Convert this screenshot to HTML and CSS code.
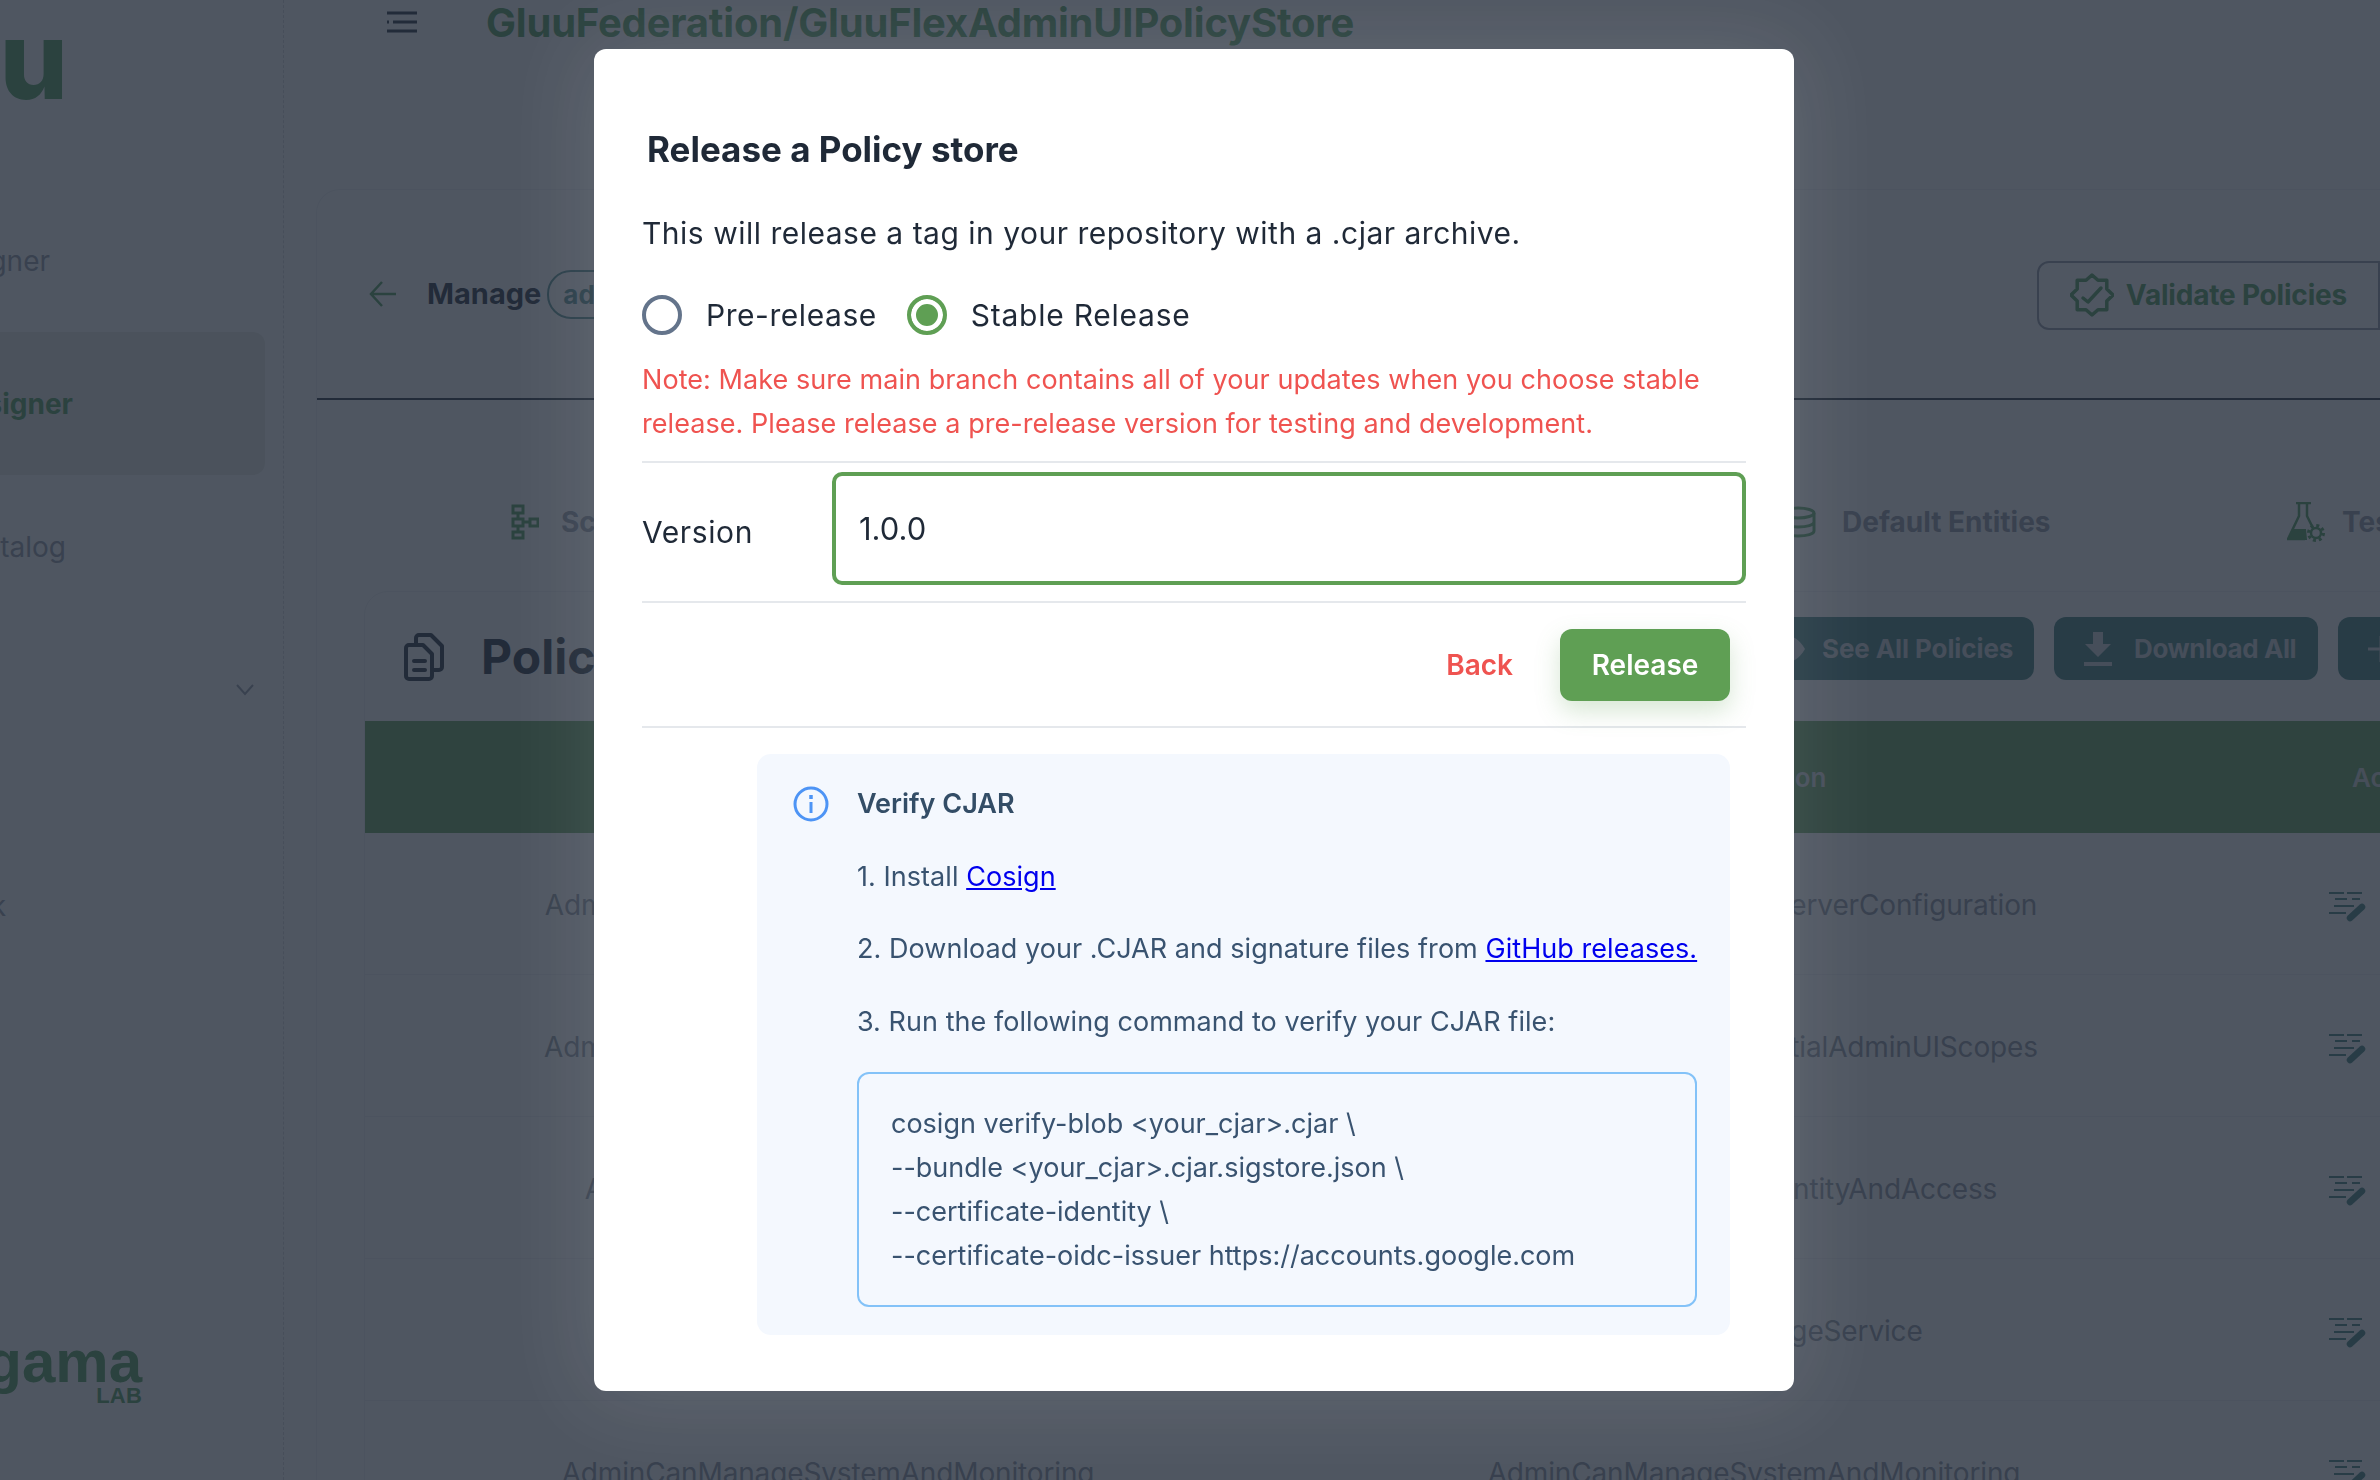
FILE: index.html
```html
<!DOCTYPE html>
<html lang="en">
  <head>
    <meta charset="UTF-8" />
    <title>Release a Policy store</title>
    <link rel="stylesheet" href="styles.css">
  </head>
  <body>
    <div id="app">
      <aside class="sidebar">
        <div class="logo">gluu</div>
        <div class="nav-item nav-first">Designer</div>
        <div class="nav-item nav-active">Policy Designer</div>
        <div class="nav-item nav-third">Catalog</div>
        <div class="nav-item nav-toggle">
          <svg width="18" height="12" viewBox="0 0 18 12"><path d="M1 1l8 9 8-9" fill="none" stroke="#9098a5" stroke-width="2"/></svg>
        </div>
        <div class="nav-item nav-fifth">Link</div>
        <div class="agama">
          <span class="agama-name">agama</span>
          <span class="agama-lab">LAB</span>
        </div>
      </aside>

      <main class="content">
        <header class="topbar">
          <svg class="menu-icon" width="30" height="22" viewBox="0 0 30 22">
            <path d="M0 2h30M6 11h24M0 20h30M0 11h2" stroke="#1f2937" stroke-width="3" fill="none"/>
          </svg>
          <h1 class="repo-title">GluuFederation/GluuFlexAdminUIPolicyStore</h1>
        </header>

        <section class="card">
          <div class="card-head">
            <svg class="back-icon" width="27" height="26" viewBox="0 0 27 26"><path d="M27 13H2M13 1L2 13l11 12" fill="none" stroke="#4a9a55" stroke-width="2.5"/></svg>
            <strong class="manage">Manage</strong>
            <span class="badge">admin-ui-policy-store</span>
            <div class="head-actions">
              <div class="btn-outline">
                <svg width="44" height="44" viewBox="0 0 44 44" fill="none" stroke="#4a9a55" stroke-width="3.5" stroke-linejoin="round" stroke-linecap="round">
                  <path d="M22 2l6 5.2h8.8v8.7l6.2 6.1-6.2 6.1v8.7H28L22 42l-6-5.2H7.2v-8.7L1 22l6.2-6.1V7.2H16z"/>
                  <path d="M13 25l5 4 13-14"/>
                </svg>
                <span>Validate Policies</span>
              </div>
              <div class="btn-outline btn-next"></div>
            </div>
          </div>

          <nav class="tabs">
            <div class="tab tab-schema">
              <svg width="28" height="36" viewBox="0 0 28 36" fill="none" stroke="#4a9a55" stroke-width="3">
                <rect x="2" y="2" width="10" height="7"/><rect x="2" y="15" width="10" height="7"/><rect x="2" y="28" width="10" height="6"/><rect x="19" y="15" width="8" height="7"/>
                <path d="M7 9v6M7 22v6M12 18h7"/>
              </svg>
              <span>Schema</span>
            </div>
            <div class="tab tab-entities">
              <svg width="40" height="32" viewBox="0 0 40 32" fill="none" stroke="#4a9a55" stroke-width="3">
                <ellipse cx="20" cy="7" rx="16" ry="5"/><path d="M4 7v18c0 3 7 5 16 5s16-2 16-5V7M4 16c0 3 7 5 16 5s16-2 16-5"/>
              </svg>
              <span>Default Entities</span>
            </div>
            <div class="tab tab-test">
              <svg width="38" height="40" viewBox="0 0 38 40">
                <path d="M9 1h15M12 1v13L1 37h17M20 1v13l6 12" fill="none" stroke="#4a9a55" stroke-width="2.5"/>
                <path d="M6 27h13l1 11H1z" fill="#4a9a55"/>
                <circle cx="29" cy="31" r="5" fill="none" stroke="#4a9a55" stroke-width="2.5"/>
                <circle cx="29" cy="31" r="7.5" fill="none" stroke="#4a9a55" stroke-width="3" stroke-dasharray="3 2.9"/>
              </svg>
              <span>Test</span>
            </div>
          </nav>

          <section class="policies">
            <div class="policies-head">
              <svg class="doc-icon" width="40" height="48" viewBox="0 0 40 48" fill="none" stroke="#1f2937" stroke-width="4" stroke-linejoin="round" stroke-linecap="round">
                <path d="M5 12h14l9 9v22a3 3 0 0 1-3 3H5a3 3 0 0 1-3-3V15a3 3 0 0 1 3-3z"/>
                <path d="M12 11V5a3 3 0 0 1 3-3h12l11 11v21a3 3 0 0 1-3 3h-6"/>
                <path d="M10 28h11M10 37h11"/>
              </svg>
              <h2 class="policies-title">Policies</h2>
              <div class="policies-actions">
                <div class="btn-solid btn-see">
                  <svg width="38" height="28" viewBox="0 0 38 28"><path d="M1 14C7 4 13 1 19 1s12 3 18 13c-6 10-12 13-18 13S7 24 1 14z" fill="#d0d5dc"/><circle cx="19" cy="14" r="6" fill="#3c7d7a"/></svg>
                  <span>See All Policies</span>
                </div>
                <div class="btn-solid btn-download">
                  <svg width="28" height="34" viewBox="0 0 28 34"><path d="M9 0h10v12h8L14 25 1 12h8zM0 30h28v4H0z" fill="#d0d5dc"/></svg>
                  <span>Download All</span>
                </div>
                <div class="btn-solid btn-add">
                  <svg width="26" height="26" viewBox="0 0 26 26"><path d="M13 0v26M0 13h26" stroke="#d0d5dc" stroke-width="3"/></svg>
                  <span>Add Policy</span>
                </div>
              </div>
            </div>

            <div class="table-head">
              <div>Policy Name</div>
              <div>Description</div>
              <div class="col-action">Actions</div>
            </div>

            <div class="table-row">
              <div>AdminCanManageAuthServerConfiguration</div>
              <div>AdminCanManageAuthServerConfiguration</div>
              <div class="col-action"><svg class="edit-icon"><use href="#edit"/></svg></div>
            </div>
            <div class="table-row">
              <div>AdminCanManageEssentialAdminUIScopes</div>
              <div>AdminCanManageEssentialAdminUIScopes</div>
              <div class="col-action"><svg class="edit-icon"><use href="#edit"/></svg></div>
            </div>
            <div class="table-row">
              <div>AdminCanManageIdentityAndAccess</div>
              <div>AdminCanManageIdentityAndAccess</div>
              <div class="col-action"><svg class="edit-icon"><use href="#edit"/></svg></div>
            </div>
            <div class="table-row">
              <div>AdminCanStorageService</div>
              <div>AdminCanStorageService</div>
              <div class="col-action"><svg class="edit-icon"><use href="#edit"/></svg></div>
            </div>
            <div class="table-row">
              <div>AdminCanManageSystemAndMonitoring</div>
              <div>AdminCanManageSystemAndMonitoring</div>
              <div class="col-action"><svg class="edit-icon"><use href="#edit"/></svg></div>
            </div>
          </section>
        </section>
      </main>
    </div>

    <svg width="0" height="0" class="defs">
      <symbol id="edit" viewBox="0 0 38 31">
        <path d="M1 2h15M19 2h15M7 8h12M24 8h8M6 15h20M1 22h17" stroke="#3c7d7a" stroke-width="2" fill="none"/>
        <path d="M34 16L22 27" stroke="#3c7d7a" stroke-width="6.5" stroke-linecap="round" fill="none"/>
      </symbol>
    </svg>

    <div class="overlay"></div>

    <div class="modal">
      <h3 class="modal-title">Release a Policy store</h3>
      <p class="modal-desc">This will release a tag in your repository with a .cjar archive.</p>

      <div class="radios">
        <label class="radio"><span class="radio-mark"></span>Pre-release</label>
        <label class="radio radio-on"><span class="radio-mark"></span>Stable Release</label>
      </div>

      <p class="note">Note: Make sure main branch contains all of your updates when you choose stable release. Please release a pre-release version for testing and development.</p>

      <div class="field">
        <label class="field-label" for="version">Version</label>
        <input type="text" id="version" value="1.0.0" />
      </div>

      <div class="modal-actions">
        <button class="btn-back">Back</button>
        <button class="btn-release">Release</button>
      </div>

      <div class="verify">
        <div class="verify-head">
          <svg width="36" height="36" viewBox="0 0 36 36" fill="none" stroke="#4d94f5" stroke-width="3">
            <circle cx="18" cy="18" r="16"/>
            <path d="M18 16v11"/>
            <path d="M18 9v4" stroke-width="3.5"/>
          </svg>
          <strong>Verify CJAR</strong>
        </div>
        <ol class="verify-steps">
          <li>1. Install <a href="#">Cosign</a></li>
          <li>2. Download your .CJAR and signature files from <a href="#">GitHub releases.</a></li>
          <li>3. Run the following command to verify your CJAR file:</li>
        </ol>
        <div class="code-box">
          <div>cosign verify-blob &lt;your_cjar&gt;.cjar \</div>
          <div>--bundle &lt;your_cjar&gt;.cjar.sigstore.json \</div>
          <div>--certificate-identity \</div>
          <div>--certificate-oidc-issuer https://accounts.google.com</div>
        </div>
      </div>
    </div>
  </body>
</html>
```

FILE: styles.css
```css
* {
  box-sizing: border-box;
}
html,
body {
  margin: 0;
  padding: 0;
  height: 100%;
  overflow: hidden;
  background: #fff;
  font-family: Inter, "Noto Sans", sans-serif;
  color: #1f2937;
}
h1,
h2,
h3,
p,
ol {
  margin: 0;
  padding: 0;
}
.defs {
  position: absolute;
}

/* page behind the dialog */
#app {
  display: flex;
  width: 2380px;
  height: 1480px;
  overflow: hidden;
}
.sidebar {
  flex: 0 0 284px;
  display: flex;
  flex-direction: column;
  height: 1480px;
  overflow: hidden;
  border-right: 1px dashed #d4d6da;
}
.logo {
  display: flex;
  justify-content: flex-end;
  height: 189px;
  padding: 10px 217px 0 0;
  font-size: 108px;
  font-weight: 800;
  line-height: 100px;
  letter-spacing: -2px;
  white-space: nowrap;
  color: #4a9a55;
}
.nav-item {
  display: flex;
  justify-content: flex-end;
  align-items: center;
  flex: 0 0 143px;
  white-space: nowrap;
  font-size: 28px;
  color: #9098a5;
}
.nav-first {
  padding-right: 233px;
}
.nav-active {
  margin-right: 18px;
  padding-right: 192px;
  border-radius: 0 12px 12px 0;
  background: #eaece6;
  font-weight: 700;
  color: #4a9a55;
}
.nav-third {
  padding-right: 217px;
}
.nav-toggle {
  padding-right: 29px;
}
.nav-fifth {
  margin-top: 73px;
  padding-right: 277px;
}
.agama {
  display: flex;
  flex-direction: column;
  align-items: flex-end;
  margin-top: auto;
  padding: 0 141px 75px 0;
  color: #4a9a55;
  font-family: "Liberation Sans", sans-serif;
  font-weight: 700;
  white-space: nowrap;
}
.agama-name {
  font-size: 60px;
  line-height: 50px;
}
.agama-lab {
  font-size: 22px;
  line-height: 18px;
  letter-spacing: 0.2px;
}
.content {
  flex: 1;
  min-width: 0;
}
.topbar {
  display: flex;
  align-items: center;
  height: 44px;
  padding-left: 103px;
}
.menu-icon {
  flex: none;
}
.repo-title {
  margin-left: 69px;
  font-size: 40px;
  font-weight: 700;
  letter-spacing: -0.2px;
  white-space: nowrap;
  color: #4a9a55;
}
.card {
  margin: 145px 0 0 32px;
  border: 1px solid #eef0f2;
  border-right: 0;
  border-radius: 24px 0 0 0;
}
.card-head {
  display: flex;
  align-items: center;
  height: 210px;
  padding: 0 0 0 52px;
  border-bottom: 2px solid #1f2937;
  white-space: nowrap;
}
.back-icon {
  flex: none;
}
.manage {
  margin: -2px 0 0 31px;
  font-size: 29px;
  font-weight: 700;
}
.badge {
  margin-left: 6px;
  padding: 7px 14px;
  border: 2px solid #4b8a8a;
  border-radius: 24px;
  font-size: 26px;
  font-weight: 700;
  color: #4b8a8a;
}
.head-actions {
  display: flex;
  margin-left: auto;
  margin-right: -200px;
  padding-top: 2px;
}
.btn-outline {
  display: flex;
  align-items: center;
  gap: 12px;
  height: 69px;
  padding: 0 31px 0 31px;
  border: 2px solid #9098a5;
  border-radius: 12px 0 0 12px;
  font-size: 28px;
  font-weight: 700;
  letter-spacing: -0.2px;
  color: #4a9a55;
}
.btn-next {
  width: 200px;
  border-left: 0;
  border-radius: 0;
}
.tabs {
  position: relative;
  height: 191px;
  white-space: nowrap;
}
.tab {
  position: absolute;
  top: 103px;
  display: flex;
  align-items: center;
  height: 38px;
  font-size: 28px;
  font-weight: 700;
  color: #9098a5;
}
.tab-schema {
  left: 194px;
  gap: 22px;
}
.tab-entities {
  left: 1461px;
  gap: 24px;
}
.tab-test {
  left: 1970px;
  gap: 17px;
}
.policies {
  width: 2100px;
  margin-left: 47px;
  border: 1px solid #eef0f2;
  border-radius: 24px 0 0 0;
}
.policies-head {
  position: relative;
  display: flex;
  align-items: center;
  height: 129px;
  padding-left: 39px;
  white-space: nowrap;
}
.policies-title {
  margin-left: 37px;
  font-size: 48px;
  font-weight: 700;
}
.policies-actions {
  position: absolute;
  top: 25px;
  left: 1380px;
  display: flex;
  gap: 20px;
}
.btn-solid {
  display: flex;
  align-items: center;
  height: 63px;
  border-radius: 12px;
  background: #3c7d7a;
  font-size: 26px;
  font-weight: 700;
  letter-spacing: -0.1px;
  color: #d0d5dc;
}
.btn-see {
  width: 289px;
  gap: 16px;
  padding-left: 23px;
}
.btn-download {
  width: 264px;
  gap: 22px;
  padding-left: 30px;
  letter-spacing: -0.4px;
}
.btn-add {
  width: 300px;
  gap: 20px;
  padding-left: 30px;
}
.table-head,
.table-row {
  display: grid;
  grid-template-columns: 926px 926px 1fr;
  align-items: center;
  text-align: center;
}
.table-head {
  height: 112px;
  background: #5f9f54;
  font-size: 26px;
  font-weight: 600;
  color: #cfd4d8;
}
.table-row {
  height: 142px;
  padding-top: 2px;
  border-bottom: 1px solid #eef0f2;
  font-size: 28px;
  letter-spacing: -0.15px;
  color: #8b93a0;
}
.col-action {
  text-align: left;
  padding-left: 111px;
}
.table-head .col-action {
  padding-left: 135px;
}
.edit-icon {
  display: block;
  width: 38px;
  height: 31px;
  margin-top: 4px;
}

/* dialog */
.overlay {
  position: fixed;
  left: 0;
  top: 0;
  right: 0;
  bottom: 0;
  background: rgba(35, 44, 57, 0.8);
}
.modal {
  position: fixed;
  left: 594px;
  top: 49px;
  width: 1200px;
  height: 1342px;
  padding: 79px 48px 0;
  border-radius: 12px;
  background: #fff;
  box-shadow: 0 0 90px 10px rgba(255, 255, 255, 0.1);
}
.modal-title {
  padding-left: 5px;
  font-size: 35px;
  line-height: 43px;
  font-weight: 700;
  color: #1f2937;
}
.modal-desc {
  margin-top: 40px;
  font-size: 30px;
  line-height: 44px;
  letter-spacing: 0.5px;
}
.radios {
  display: flex;
  gap: 30px;
  margin-top: 40px;
}
.radio {
  display: flex;
  align-items: center;
  gap: 24px;
  height: 40px;
  font-size: 30px;
  letter-spacing: 0.55px;
}
.radio-on {
  letter-spacing: 0.75px;
}
.radio-mark {
  width: 40px;
  height: 40px;
  border: 4px solid #64748b;
  border-radius: 100%;
  background: #fff;
}
.radio-on .radio-mark {
  border-color: #5f9f54;
  background: #5f9f54;
  box-shadow: inset 0 0 0 5px #fff;
}
.note {
  margin-top: 23px;
  font-size: 27px;
  line-height: 43.5px;
  letter-spacing: 0.06px;
  color: #ef5350;
}
.field {
  display: flex;
  align-items: center;
  margin-top: 16px;
  padding: 9px 0 16px;
  border-top: 2px solid #e5e8ec;
  border-bottom: 2px solid #e5e8ec;
}
.field-label {
  flex: 0 0 190px;
  padding-top: 6px;
  font-size: 30px;
  letter-spacing: 0.6px;
}
.field input {
  flex: 1;
  min-width: 0;
  height: 113px;
  padding: 0 23px;
  border: 4px solid #5f9f54;
  border-radius: 10px;
  outline: 0;
  font-family: inherit;
  font-size: 31px;
  color: #1f2937;
}
.modal-actions {
  display: flex;
  justify-content: flex-end;
  align-items: center;
  gap: 47px;
  height: 125px;
  padding-right: 16px;
  border-bottom: 2px solid #e5e8ec;
}
.modal-actions button {
  border: 0;
  font-family: inherit;
  font-size: 28px;
  font-weight: 600;
  cursor: pointer;
}
.btn-back {
  padding: 0;
  background: transparent;
  color: #ef5350;
}
.btn-release {
  width: 170px;
  height: 72px;
  padding: 0;
  border-radius: 12px;
  background: #5f9f54;
  color: #fff;
  box-shadow: 0 10px 24px rgba(95, 159, 84, 0.25);
}
.verify {
  margin: 26px 16px 0 115px;
  padding: 28px 33px 28px 36px;
  border-radius: 14px;
  background: #f4f8fe;
  font-size: 27px;
  line-height: 44px;
  color: #395370;
}
.verify-head {
  display: flex;
  align-items: center;
  gap: 28px;
}
.verify-head strong {
  font-weight: 600;
  color: #334d66;
}
.verify-steps {
  list-style: none;
  padding-left: 64px;
  white-space: nowrap;
  letter-spacing: 0.05px;
}
.verify-steps li {
  margin-top: 28.5px;
}
.verify-steps a {
  color: #0000ee;
}
.code-box {
  margin: 28px 0 0 64px;
  padding: 28px 32px 27px;
  border: 2px solid #83c2f8;
  border-radius: 12px;
}
```
